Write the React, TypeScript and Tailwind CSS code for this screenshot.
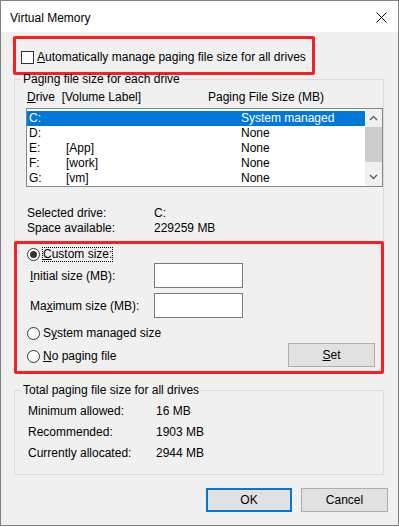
import React from 'react';

const drives = [
  { drive: 'C:', label: '', size: 'System managed', selected: true },
  { drive: 'D:', label: '', size: 'None' },
  { drive: 'E:', label: '[App]', size: 'None' },
  { drive: 'F:', label: '[work]', size: 'None' },
  { drive: 'G:', label: '[vm]', size: 'None' },
];

const Radio = ({ checked }: { checked?: boolean }) => (
  <span className="flex h-[13px] w-[13px] shrink-0 items-center justify-center rounded-full border border-[#333333] bg-white">
    {checked && <span className="h-[7px] w-[7px] rounded-full bg-[#333333]" />}
  </span>
);

const Button = ({ children, primary, className = '' }: { children: React.ReactNode; primary?: boolean; className?: string }) => (
  <div
    className={`flex h-[24px] items-center justify-center bg-[#e1e1e1] ${
      primary ? 'border-2 border-[#0078d7]' : 'border border-[#adadad]'
    } ${className}`}
  >
    {children}
  </div>
);

export default function App() {
  return (
    <div className="h-[527px] w-[399px] bg-white font-['Liberation_Sans',Arial,sans-serif] text-[12px] text-black">
      <div className="flex h-[526px] w-[399px] flex-col border border-[#808080] bg-[#f0f0f0]">
        {/* title bar */}
        <div className="flex h-[31px] shrink-0 items-center justify-between bg-white pl-[9px] pr-[11px]">
          <span className="pt-[2px]">Virtual Memory</span>
          <svg width="11" height="11" viewBox="0 0 11 11" className="mt-[2px]">
            <path d="M0.5 0.5 L10.5 10.5 M10.5 0.5 L0.5 10.5" stroke="#000" strokeWidth="1" />
          </svg>
        </div>

        {/* auto manage */}
        <div className="ml-[12px] mt-[4px] flex h-[39px] w-[302px] items-center rounded-[2px] border-[3px] border-[#f82020] pl-[5px] pt-[3px]">
          <span className="h-[13px] w-[13px] shrink-0 border border-[#333333] bg-white" />
          <span className="ml-[3px]">
            <u>A</u>utomatically manage paging file size for all drives
          </span>
        </div>

        {/* paging file size for each drive */}
        <fieldset className="-mt-[2px] ml-[13px] w-[370px] min-w-0 border border-[#dcdcdc]">
          <legend className="ml-[6px] px-[2px] leading-[12px]">Paging file size for each drive</legend>

          <div className="mt-[4px] flex h-[16px] pl-[12px] leading-[16px]">
            <span className="w-[181px]">
              <u>D</u>rive&nbsp; [Volume Label]
            </span>
            <span>Paging File Size (MB)</span>
          </div>

          <div className="ml-[11px] mt-[3px] flex h-[79px] w-[357px] border border-[#828790] bg-white">
            <div className="w-[338px] pt-[2px]">
              {drives.map(d => (
                <div
                  key={d.drive}
                  className={`flex h-[15px] items-center pl-[2px] leading-[15px] ${
                    d.selected ? 'bg-[#0078d7] text-white' : ''
                  }`}
                >
                  <span className="w-[37px]">{d.drive}</span>
                  <span className="w-[175px]">{d.label}</span>
                  <span>{d.size}</span>
                </div>
              ))}
            </div>
            <div className="flex w-[17px] flex-col bg-[#f0f0f0]">
              <div className="flex h-[18px] items-center justify-center">
                <svg width="9" height="6" viewBox="0 0 9 6">
                  <path d="M1 5 L4.5 1.5 L8 5" fill="none" stroke="#606060" strokeWidth="1.4" />
                </svg>
              </div>
              <div className="h-[35px] bg-[#cdcdcd]" />
              <div className="flex-1" />
              <div className="flex h-[18px] items-center justify-center">
                <svg width="9" height="6" viewBox="0 0 9 6">
                  <path d="M1 1 L4.5 4.5 L8 1" fill="none" stroke="#606060" strokeWidth="1.4" />
                </svg>
              </div>
            </div>
          </div>

          <div className="mt-[19px] pl-[12px] leading-[15px]">
            <div className="flex">
              <span className="w-[127px]">Selected drive:</span>
              <span>C:</span>
            </div>
            <div className="flex">
              <span className="w-[127px]">Space available:</span>
              <span>229259 MB</span>
            </div>
          </div>

          {/* custom size section */}
          <div className="-mx-px -mb-px mt-[5px] h-[133px] rounded-[2px] border-[3px] border-[#f82020] pt-[3px]">
            <div className="flex h-[15px] items-center pl-[10px]">
              <Radio checked />
              <span className="ml-[2px] border border-dotted border-black px-0 leading-[13px]">
                <u>C</u>ustom size:
              </span>
            </div>

            <div className="mt-[1px] flex h-[25px] items-center">
              <span className="w-[137px] pl-[13px]">
                <u>I</u>nitial size (MB):
              </span>
              <div className="h-[25px] w-[89px] border border-[#7a7a7a] bg-white" />
            </div>

            <div className="mt-[5px] flex h-[25px] items-center">
              <span className="w-[137px] pl-[13px]">
                Ma<u>x</u>imum size (MB):
              </span>
              <div className="h-[25px] w-[89px] border border-[#7a7a7a] bg-white" />
            </div>

            <div className="mt-[7px] flex items-end justify-between pr-[6px]">
              <div className="flex flex-col gap-[7px] pb-[3px] pl-[10px]">
                <div className="flex h-[16px] items-center">
                  <Radio />
                  <span className="ml-[3px]">
                    S<u>y</u>stem managed size
                  </span>
                </div>
                <div className="flex h-[16px] items-center">
                  <Radio />
                  <span className="ml-[3px]">
                    <u>N</u>o paging file
                  </span>
                </div>
              </div>
              <Button className="w-[87px]">
                <span>
                  <u>S</u>et
                </span>
              </Button>
            </div>
          </div>
        </fieldset>

        {/* totals */}
        <fieldset className="ml-[13px] mt-[10px] h-[91px] w-[370px] min-w-0 border border-[#dcdcdc]">
          <legend className="ml-[6px] px-[2px] leading-[12px]">Total paging file size for all drives</legend>
          <div className="pl-[13px] pt-[5px] leading-[21px]">
            <div className="flex">
              <span className="w-[128px]">Minimum allowed:</span>
              <span>16 MB</span>
            </div>
            <div className="flex">
              <span className="w-[128px]">Recommended:</span>
              <span>1903 MB</span>
            </div>
            <div className="flex">
              <span className="w-[128px]">Currently allocated:</span>
              <span>2944 MB</span>
            </div>
          </div>
        </fieldset>

        {/* dialog buttons */}
        <div className="mt-[13px] flex justify-end gap-[9px] pr-[10px]">
          <Button primary className="w-[86px]">OK</Button>
          <Button className="w-[87px]">Cancel</Button>
        </div>
      </div>
    </div>
  );
}
